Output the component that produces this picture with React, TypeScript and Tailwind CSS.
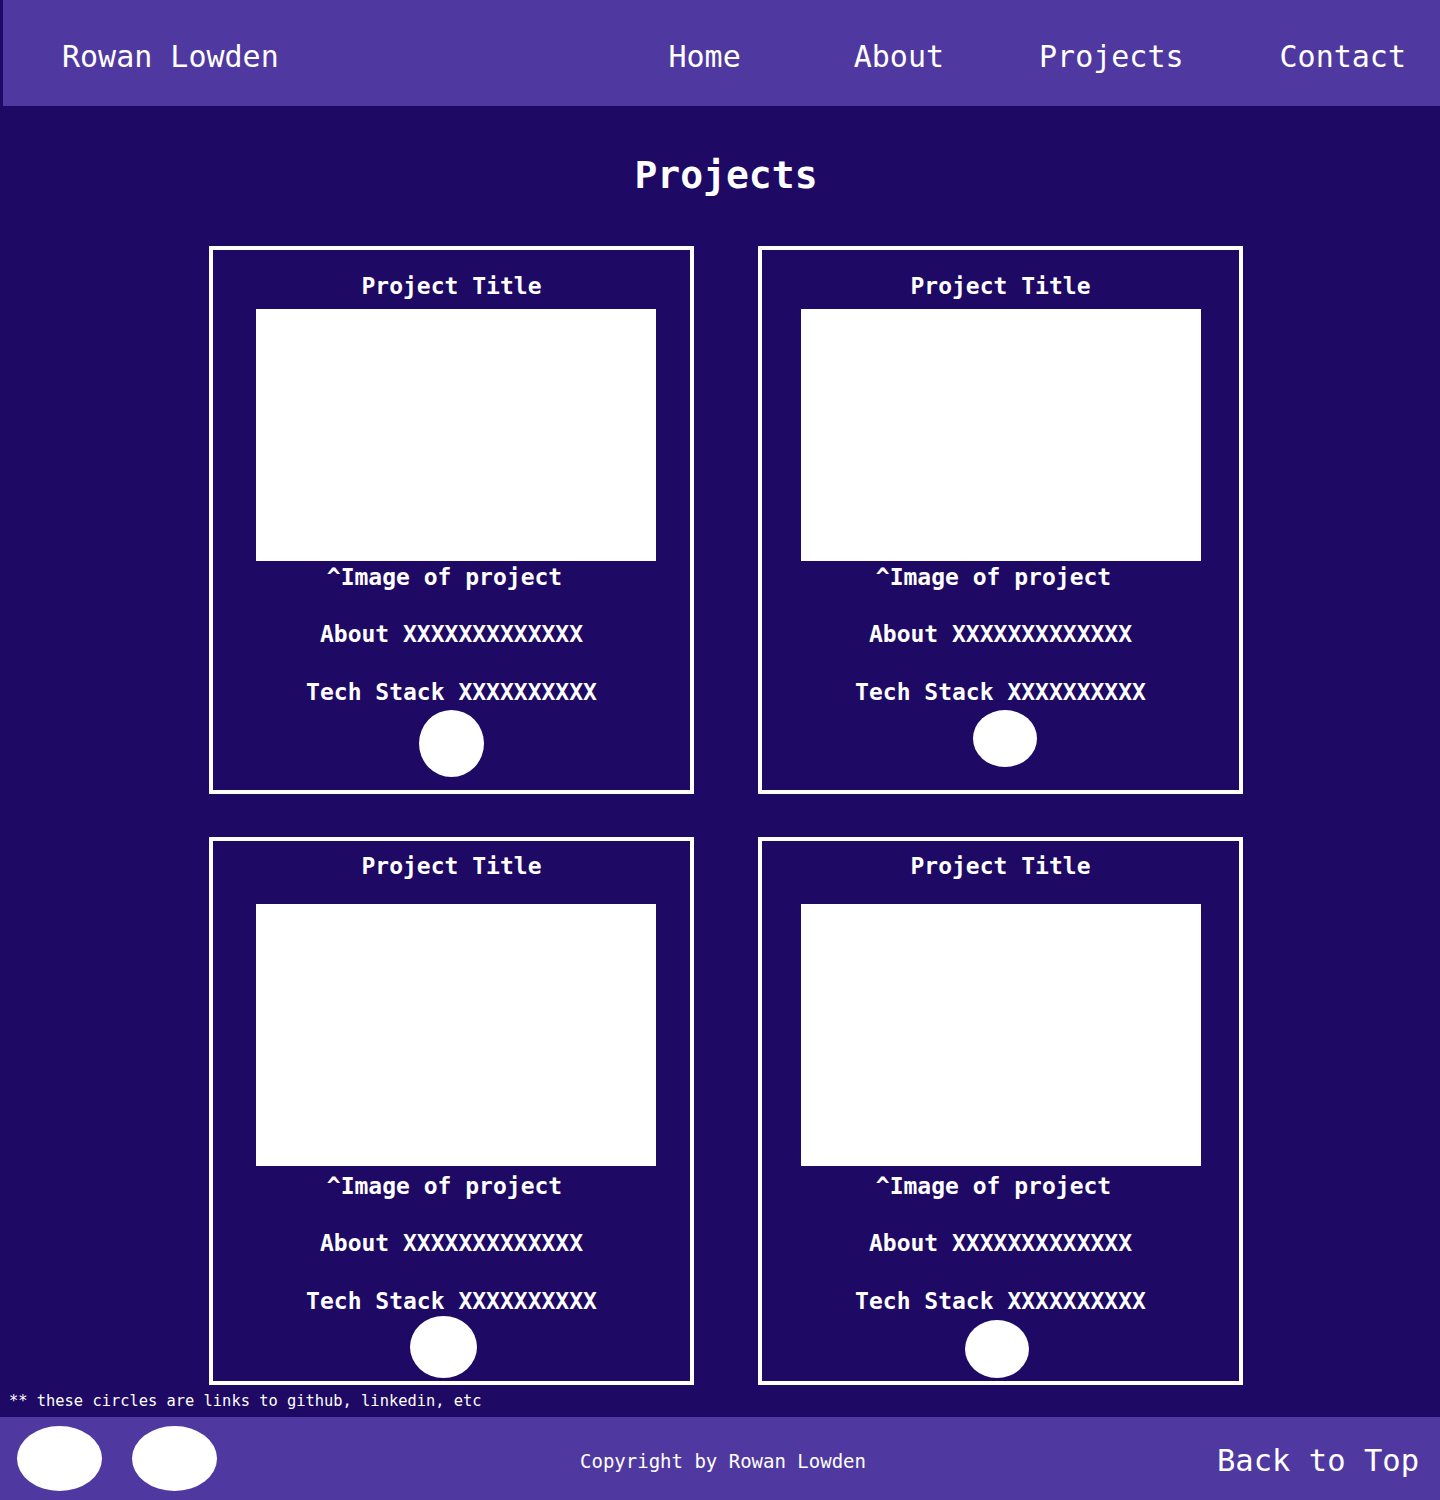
import React from 'react';

const mono = { fontFamily: '"DejaVu Sans Mono", "Liberation Mono", monospace' };

interface ProjectCardProps {
  titleClass: string;
  imageClass: string;
  captionClass: string;
  circleClass: string;
}

const ProjectCard: React.FC<ProjectCardProps> = ({
  titleClass,
  imageClass,
  captionClass,
  circleClass
}) => {
  return (
    <div className="h-[548px] w-[485px] border-4 border-white flex flex-col items-center text-white font-bold text-[23px] leading-[28px]">
      <div className={titleClass}>Project Title</div>
      <div className={`w-[400px] bg-white ${imageClass}`}></div>
      <div className={`mr-[14px] ${captionClass}`}>^Image of project</div>
      <div className="mt-[29px]">About XXXXXXXXXXXXX</div>
      <div className="mt-[30px]">Tech Stack XXXXXXXXXX</div>
      <div className={`bg-white rounded-[50%] ${circleClass}`}></div>
    </div>
  );
};

export default function App() {
  return (
    <div className="min-h-[1500px] bg-[#1e0a64] text-white" style={mono}>
      <header className="ml-[3px] h-[106px] bg-[#4f39a1] flex items-center pt-[7px] pl-[59px] pr-[34px] text-[30px]">
        <div>Rowan Lowden</div>
        <nav className="ml-auto flex items-center">
          <a className="mr-[113px]">Home</a>
          <a className="mr-[95px]">About</a>
          <a className="mr-[96px]">Projects</a>
          <a>Contact</a>
        </nav>
      </header>

      <h1 className="mt-[46px] text-center text-[38px] leading-[46px] font-bold pl-[12px]">Projects</h1>

      <div className="ml-[209px] mt-[48px] grid grid-cols-[485px_485px] gap-x-[64px] gap-y-[43px] w-[1034px]">
        <ProjectCard
          titleClass="mt-[22px]"
          imageClass="mt-[9px] h-[252px] ml-[8px]"
          captionClass="mt-[2px]"
          circleClass="mt-[4px] w-[65px] h-[67px]"
        />
        <ProjectCard
          titleClass="mt-[22px]"
          imageClass="mt-[9px] h-[252px]"
          captionClass="mt-[2px]"
          circleClass="mt-[4px] w-[64px] h-[57px] ml-[9px]"
        />
        <ProjectCard
          titleClass="mt-[11px]"
          imageClass="mt-[24px] h-[262px] ml-[8px]"
          captionClass="mt-[6px]"
          circleClass="mt-[1px] w-[67px] h-[62px] mr-[16px]"
        />
        <ProjectCard
          titleClass="mt-[11px]"
          imageClass="mt-[24px] h-[262px]"
          captionClass="mt-[6px]"
          circleClass="mt-[5px] w-[64px] h-[58px] mr-[7px]"
        />
      </div>

      <p className="mt-[7px] pl-[9px] text-[15.4px] leading-[18px]">** these circles are links to github, linkedin, etc</p>

      <footer className="mt-[7px] h-[83px] bg-[#4f39a1] flex items-center pl-[17px] pr-[21px]">
        <div className="w-[85px] h-[65px] rounded-[50%] bg-white"></div>
        <div className="ml-[30px] w-[85px] h-[65px] rounded-[50%] bg-white"></div>
        <div className="ml-[363px] mt-[5px] text-[19px]">Copyright by Rowan Lowden</div>
        <a className="ml-auto mt-[4px] text-[30.5px]">Back to Top</a>
      </footer>
    </div>
  );
}
